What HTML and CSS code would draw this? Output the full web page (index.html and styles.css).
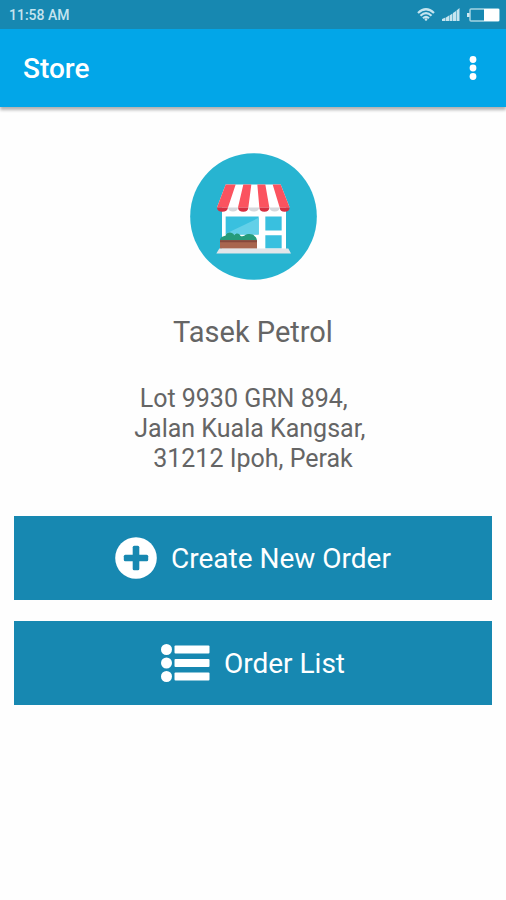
FILE: index.html
```html
<!DOCTYPE html>
<html lang="en">
<head>
<meta charset="utf-8">
<meta name="viewport" content="width=device-width, initial-scale=1">
<title>Store</title>
<link rel="stylesheet" href="styles.css">
</head>
<body>
<div class="status-bar">
  <span class="status-time">11:58 AM</span>
  <div class="status-icons">
    <svg class="wifi" viewBox="0 0 18 13" aria-hidden="true">
      <g fill="none" stroke="currentColor" stroke-width="2.200">
        <path d="M1 5Q9-2.500 17 5"/>
        <path d="M3.500 7.800Q9 2.600 14.500 7.800"/>
        <path d="M6 10.200Q9 7.400 12 10.200"/>
      </g>
      <circle cx="9" cy="11.500" r="1.300" fill="currentColor"/>
    </svg>
    <svg class="signal" viewBox="0 0 18 13" aria-hidden="true">
      <path fill="currentColor" d="M0 11l3.500-1.500V13H0zM4 9.500L7 7.500V13H4zM7.500 7.500L10.500 5.500V13H7.500zM11 5l3-2v10h-3zM14.500 2.500L17.500 0v13h-3z"/>
    </svg>
    <svg class="battery" viewBox="0 0 33 14" aria-hidden="true">
      <path d="M0 5h3v4H0z" fill="#cfe8f0"/>
      <rect x="3" y="1" width="29" height="12" rx="1" fill="none" stroke="#a5d3e2" stroke-width="1.500"/>
      <path d="M17 1h15v12H17z" fill="#fff"/>
    </svg>
  </div>
</div>
<header class="app-bar">
  <h1 class="app-title">Store</h1>
  <button class="menu-button" type="button" aria-label="More options">
    <svg class="menu-icon" viewBox="0 0 8 24" aria-hidden="true">
      <g fill="currentColor"><circle cx="4" cy="3.500" r="3.400"/><circle cx="4" cy="12" r="3.400"/><circle cx="4" cy="20.500" r="3.400"/></g>
    </svg>
  </button>
</header>
<main class="content">
  <svg class="store-logo" viewBox="30 24 381 380" aria-hidden="true">
    <circle cx="220.500" cy="214" r="190" fill="#27b4d1"/>
    <path d="M126 185H318V312H126z" fill="#fff"/>
    <path d="M137 214H236V268H137z" fill="#39c0df"/>
    <path d="M137 266L236 218V268H137z" fill="#63d0e8"/>
    <path d="M256 214H305V256H256zM256 270H305V310H256z" fill="#39c0df"/>
    <path d="M120 283C124 273 133 274 137 271C140 259 158 260 163 270C169 262 178 265 181 272C186 275 190 273 194 271C202 264 220 266 224 273C230 277 231 283 231 290H120z" fill="#259b7a"/>
    <path d="M120 285H231V311H120z" fill="#a9654e"/>
    <path d="M120 285H231V291H120z" fill="#87483c"/>
    <path d="M118 310H325L333 325H109z" fill="#e2e5e9"/>
    <path d="M137 118H302L329 187H111z" fill="#fff"/>
    <path d="M137 118H167L144 187H111zM190 118H214L205 187H174zM232 118H256L268 187H238zM278 118H302L329 187H299z" fill="#fb535f"/>
    <path d="M144 187H174Q173 199 159 199Q145 199 144 187zM205 187H238Q236 199 221 199Q207 199 205 187zM268 187H299Q298 199 284 199Q270 199 268 187z" fill="#d5d8dc"/>
    <path d="M111 187H144Q142 200 127 200Q112 200 111 187zM174 187H205Q204 200 190 200Q175 200 174 187zM238 187H268Q267 200 253 200Q239 200 238 187zM299 187H329Q328 200 314 200Q300 200 299 187z" fill="#d62f42"/>
  </svg>
  <h2 class="store-name">Tasek Petrol</h2>
  <address class="store-address">Lot 9930 GRN 894,&nbsp;&nbsp;&nbsp;
Jalan Kuala Kangsar,&nbsp;
31212 Ipoh, Perak</address>
  <div class="actions">
    <button class="action" type="button">
      <svg class="plus-icon" viewBox="0 0 42 42" aria-hidden="true">
        <circle cx="21" cy="21" r="20.800" fill="currentColor"/>
        <g fill="#1788b1">
          <rect x="17.700" y="8.800" width="6.600" height="24.400" rx="1.500"/>
          <rect x="8.800" y="17.700" width="24.400" height="6.600" rx="1.500"/>
        </g>
      </svg>
      <span>Create New Order</span>
    </button>
    <button class="action" type="button">
      <svg class="list-icon" viewBox="0 0 49 40" aria-hidden="true">
        <g fill="currentColor">
          <circle cx="5.500" cy="6.500" r="5.500"/><circle cx="5.500" cy="20" r="5.500"/><circle cx="5.500" cy="33.500" r="5.500"/>
          <rect x="13.500" y="2.500" width="35" height="8" rx="1"/><rect x="13.500" y="16" width="35" height="8" rx="1"/><rect x="13.500" y="29.500" width="35" height="8" rx="1"/>
        </g>
      </svg>
      <span>Order List</span>
    </button>
  </div>
</main>
</body>
</html>
```
FILE: styles.css
```css
* {
  box-sizing: border-box;
}

body {
  margin: 0;
  background: #fefefe;
  color: #656565;
  font-family: Roboto, "Liberation Sans", sans-serif;
}

.status-bar {
  display: flex;
  align-items: center;
  justify-content: space-between;
  height: 29px;
  padding: 0 6px 0 9px;
  background: #1788b1;
  color: #c5e4ef;
}

.status-time {
  font-size: 14px;
  font-weight: 500;
}

.status-icons {
  display: flex;
  align-items: center;
  gap: 7px;
}

.wifi,
.signal {
  width: 18px;
  height: 13px;
}

.battery {
  width: 33px;
  height: 14px;
}

.app-bar {
  display: flex;
  align-items: center;
  justify-content: space-between;
  height: 78px;
  padding: 0 21px 0 23px;
  background: #02a6e8;
  color: #fff;
  box-shadow: 0 3px 3px rgba(0, 0, 0, 0.3);
}

.app-title {
  margin: 0;
  font-size: 28px;
  font-weight: 500;
}

.menu-button {
  display: flex;
  justify-content: center;
  width: 24px;
  padding: 0;
  border: 0;
  background: none;
  color: inherit;
}

.menu-icon {
  width: 8px;
  height: 24px;
}

.content {
  display: flex;
  flex-direction: column;
  align-items: center;
  padding: 46px 14px;
}

.store-logo {
  width: 127px;
  height: 127px;
}

.store-name {
  margin: 35px 0 0;
  font-size: 29px;
  font-weight: 400;
  line-height: 34px;
}

.store-address {
  margin-top: 35px;
  font-size: 25px;
  font-style: normal;
  line-height: 30px;
  text-align: center;
  white-space: pre;
}

.actions {
  display: grid;
  gap: 21px;
  width: 100%;
  margin-top: 42px;
}

.action {
  display: flex;
  align-items: center;
  justify-content: center;
  gap: 14px;
  width: 100%;
  height: 84px;
  border: 0;
  background: #1788b1;
  color: #fff;
  font-family: inherit;
  font-size: 28px;
}

.plus-icon {
  width: 42px;
  height: 42px;
}

.list-icon {
  width: 49px;
  height: 40px;
}
```
